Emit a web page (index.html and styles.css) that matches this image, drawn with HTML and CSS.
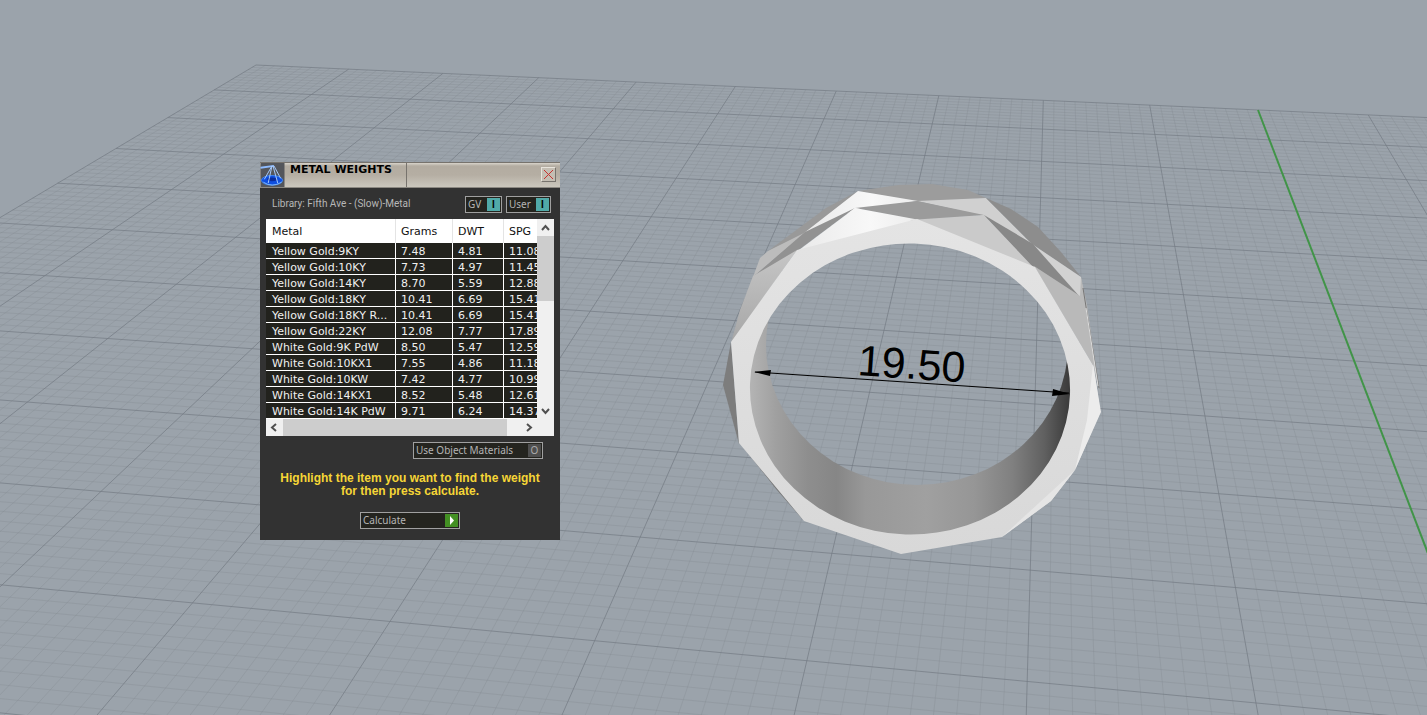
FILE: index.html
```html
<!DOCTYPE html>
<html lang="en">
<head>
    <meta charset="UTF-8">
    <meta name="viewport" content="width=device-width, initial-scale=1.0">
    <title>Metal Weights</title>
    <link rel="stylesheet" href="styles.css">
</head>
<body>
    <main class="viewport">
        <svg class="scene" viewBox="0 0 1427 715" preserveAspectRatio="xMinYMin slice" role="img" aria-label="Ring model, inner diameter 19.50">
            <defs>
                <linearGradient id="band" gradientUnits="userSpaceOnUse" x1="750" y1="0" x2="1070" y2="0">
                    <stop offset="0" stop-color="#b4b4b4"/>
                    <stop offset=".08" stop-color="#a0a0a0"/>
                    <stop offset=".18" stop-color="#8e8e8e"/>
                    <stop offset=".27" stop-color="#868686"/>
                    <stop offset=".36" stop-color="#989898"/>
                    <stop offset=".55" stop-color="#a0a0a0"/>
                    <stop offset=".7" stop-color="#969696"/>
                    <stop offset=".82" stop-color="#808080"/>
                    <stop offset=".92" stop-color="#606060"/>
                    <stop offset="1" stop-color="#3a3a3a"/>
                </linearGradient>
                <linearGradient id="face" x1="0" y1="0" x2="0" y2="1">
                    <stop offset="0" stop-color="#e4e4e4"/>
                    <stop offset="1" stop-color="#d8d8d8"/>
                </linearGradient>
                <linearGradient id="gleam" x1="0" y1="0" x2="1" y2="0">
                    <stop offset="0" stop-color="#e9e9e9"/>
                    <stop offset=".6" stop-color="#f8f8f8"/>
                    <stop offset="1" stop-color="#ececec"/>
                </linearGradient>
                <linearGradient id="side" x1="0" y1="0" x2="0" y2="1">
                    <stop offset="0" stop-color="#c6c6c6"/>
                    <stop offset="1" stop-color="#a6a6a6"/>
                </linearGradient>
                <mask id="backHole" maskUnits="userSpaceOnUse" x="700" y="150" width="450" height="450">
                    <rect x="700" y="150" width="450" height="450" fill="#fff"/>
                    <ellipse cx="917" cy="345" rx="151" ry="140" fill="#000"/>
                </mask>
            </defs>

            <path id="gridMinor" class="grid-minor"/>
            <path id="gridMajor" class="grid-major"/>
            <path id="axisY" class="axis-y"/>

            <!-- inside of the band -->
            <ellipse cx="910" cy="389" rx="161" ry="147" fill="url(#band)" mask="url(#backHole)"/>

            <!-- outer facets -->
            <path fill="#9c9c9c" d="M858 191L898 185L932 184L968 190L986 198L917 202Z"/>
            <path fill="#999" d="M858 191L826 208L768 251L806 233Z"/>
            <path fill="url(#gleam)" d="M858 191L918 201L855 210L804 233Z"/>
            <path fill="#d0d0d0" d="M917 201L986 198L1034 246L984 216Z"/>
            <path fill="#8d8d8d" d="M986 198L1011 209L1038 227L1061 252L1081 277L1033 245Z"/>
            <path fill="#d2d2d2" d="M1032 244L1081 277L1084 300L1079 297Z"/>
            <path fill="#bcbcbc" d="M768 251L760 258L753 277L806 232Z"/>
            <path fill="#929292" d="M855 208L805 232L753 277L797 251Z"/>
            <path fill="#9b9b9b" d="M855 208L917 201L984 215L917 220Z"/>
            <path fill="url(#gleam)" d="M855 208L920 220L795 253Z"/>
            <path fill="#cacaca" d="M910 220L984 215L1037 270Z"/>
            <path fill="#888" d="M984 215L1033 244L1080 297L1034 268Z"/>
            <path fill="url(#side)" d="M753 276L797 250L731 343L740 310Z"/>
            <path fill="#b9b9b9" d="M1034 266L1080 296L1081 277L1087 305L1100 395L1094 367Z"/>
            <path class="edge" d="M1083 288L1099 388"/>
            <path class="edge-light" d="M1086 308L1098 386"/>
            <path fill="#7d7d7d" d="M731 342L723 385L739 444Z"/>
            <path fill="#777" d="M740 443L776 489L804 521L780 486Z"/>

            <!-- front face -->
            <path fill="url(#face)" fill-rule="evenodd" d="M917 219L797 250L731 342L739 443L804 521L901 554L1002 537L1051 501L1075 470L1100 412L1094 367L1035 267ZM750 384A160 145.5 2 0 0 1070 394A160 145.5 2 0 0 750 384Z"/>
            <path fill="#ececec" d="M1093 364L1101 412L1075 470L1087 420Z"/>
            <path fill="#e5e5e5" d="M1075 470L1051 501L1002 537L1040 502Z"/>

            <!-- dimension -->
            <path class="dim-line" d="M755 372L1069 393"/>
            <path d="M754 372L771 370L770 376ZM1070 394L1053 389L1052 396Z"/>
            <text class="dim-text" x="857" y="375" transform="rotate(4 857 375)">19.50</text>
        </svg>

        <section class="dialog" aria-labelledby="dialogTitle">
            <header class="titlebar">
                <svg class="logo" viewBox="0 0 25 25" aria-hidden="true">
                    <rect width="25" height="25" fill="#54565b"/>
                    <ellipse cx="12" cy="18" rx="11" ry="5" fill="#0f4fe0" stroke="#3f86f5"/>
                    <ellipse cx="12" cy="17" rx="5" ry="2" fill="#0b2c9a"/>
                    <path d="M0 5L14 3" fill="none" stroke="#8fbcff" stroke-width="2"/>
                    <path d="M12 3L4 17M12 3L8 21M14 3L21 16M13 3L18 21" fill="none" stroke="#a9cdff"/>
                    <path d="M3 20Q12 26 22 20" fill="none" stroke="#7db8ff"/>
                </svg>
                <h1 id="dialogTitle">METAL WEIGHTS</h1>
                <button class="close" type="button" aria-label="Close">
                    <svg viewBox="0 0 9 9" aria-hidden="true"><path d="M0 0L9 9M9 0L0 9"/></svg>
                </button>
            </header>

            <div class="library">
                <span class="library-name">Library: Fifth Ave - (Slow)-Metal</span>
                <button class="btn btn-gv" type="button" aria-pressed="true">GV <span class="flag on">I</span></button>
                <button class="btn btn-user" type="button" aria-pressed="true">User <span class="flag on">I</span></button>
            </div>

            <div class="list">
                <div class="list-body">
                    <table>
                        <colgroup>
                            <col class="col-metal">
                            <col class="col-grams">
                            <col class="col-dwt">
                            <col class="col-spg">
                        </colgroup>
                        <thead>
                            <tr><th>Metal</th><th>Grams</th><th>DWT</th><th>SPG</th></tr>
                        </thead>
                        <tbody>
                            <tr><td>Yellow Gold:9KY</td><td>7.48</td><td>4.81</td><td>11.08</td></tr>
                            <tr><td>Yellow Gold:10KY</td><td>7.73</td><td>4.97</td><td>11.45</td></tr>
                            <tr><td>Yellow Gold:14KY</td><td>8.70</td><td>5.59</td><td>12.88</td></tr>
                            <tr><td>Yellow Gold:18KY</td><td>10.41</td><td>6.69</td><td>15.41</td></tr>
                            <tr><td>Yellow Gold:18KY R...</td><td>10.41</td><td>6.69</td><td>15.41</td></tr>
                            <tr><td>Yellow Gold:22KY</td><td>12.08</td><td>7.77</td><td>17.89</td></tr>
                            <tr><td>White Gold:9K PdW</td><td>8.50</td><td>5.47</td><td>12.59</td></tr>
                            <tr><td>White Gold:10KX1</td><td>7.55</td><td>4.86</td><td>11.18</td></tr>
                            <tr><td>White Gold:10KW</td><td>7.42</td><td>4.77</td><td>10.99</td></tr>
                            <tr><td>White Gold:14KX1</td><td>8.52</td><td>5.48</td><td>12.61</td></tr>
                            <tr><td>White Gold:14K PdW</td><td>9.71</td><td>6.24</td><td>14.37</td></tr>
                        </tbody>
                    </table>
                </div>
                <div class="scroll-y">
                    <svg class="arrow" viewBox="0 0 17 17" aria-hidden="true"><path d="M5 11L8.500 7L12 11"/></svg>
                    <div class="thumb"></div>
                    <svg class="arrow arrow-end" viewBox="0 0 17 17" aria-hidden="true"><path d="M5 7L8.500 11L12 7"/></svg>
                </div>
                <div class="scroll-x">
                    <svg class="arrow" viewBox="0 0 17 17" aria-hidden="true"><path d="M10 5L6 8.500L10 12"/></svg>
                    <div class="thumb"></div>
                    <svg class="arrow arrow-end" viewBox="0 0 17 17" aria-hidden="true"><path d="M7 5L11 8.500L7 12"/></svg>
                </div>
            </div>

            <div class="materials">
                <button class="btn btn-materials" type="button" aria-pressed="false">Use Object Materials <span class="flag off">O</span></button>
            </div>

            <p class="hint">Highlight the item you want to find the weight<br>for then press calculate.</p>

            <button class="btn btn-calc" type="button">Calculate
                <span class="flag go"><svg viewBox="0 0 13 13" aria-hidden="true"><path d="M5 2L9 6.500L5 11Z"/></svg></span>
            </button>
        </section>
    </main>
    <script src="grid.js"></script>
</body>
</html>
```
FILE: styles.css
```css
* {
    box-sizing: border-box;
}
body {
    margin: 0;
    background: #9ba3ab;
    font-family: "DejaVu Sans", Verdana, sans-serif;
    font-size: 11px;
}
.viewport {
    position: relative;
    height: 100vh;
    min-height: 560px;
    overflow: hidden;
}
.scene {
    display: block;
    width: 100%;
    height: 100%;
}
.grid-minor {
    fill: none;
    stroke: #808890;
    stroke-opacity: 0.3;
}
.grid-major {
    fill: none;
    stroke: #737b83;
    stroke-opacity: 0.7;
}
.axis-y {
    stroke: #419448;
    stroke-width: 2;
}
.edge {
    fill: none;
    stroke: #777;
}
.edge-light {
    fill: none;
    stroke: #ddd;
}
.dim-line {
    stroke: #000;
}
.dim-text {
    font-family: "Liberation Sans", Arial, sans-serif;
    font-size: 43px;
}

/* dialog window floating over the viewport */
.dialog {
    position: absolute;
    left: 260px;
    top: 162px;
    width: 300px;
    padding-bottom: 11px;
    background: #323232;
    color: #b8b8b8;
}
.titlebar {
    display: flex;
    height: 26px;
    border-top: 1px solid #77736d;
    border-bottom: 1px solid #8c8982;
    background: linear-gradient(#d8d4cb 0, #b3aca1 3px, #b5aea3 50%, #cbc7bd 100%);
}
.logo {
    width: 25px;
    height: 24px;
}
.titlebar h1 {
    width: 122px;
    margin: 0;
    padding-left: 5px;
    border-right: 1px solid #77736d;
    color: #000;
    font-size: 11px;
    line-height: 13px;
}
.close {
    width: 15px;
    height: 15px;
    margin: 4px 4px 0 auto;
    padding: 2px;
    border: 1px solid #77736d;
    border-top-color: #e8e4dc;
    border-left-color: #e8e4dc;
    background: #c4beb3;
}
.close svg {
    display: block;
    width: 9px;
    height: 9px;
}
.close path {
    stroke: #c8322f;
}
.library {
    display: flex;
    gap: 4px;
    padding: 8px 9px 6px 12px;
}
.library-name {
    flex: 1;
    font-family: Roboto, Arial, sans-serif;
    font-size: 10px;
    line-height: 15px;
}
.btn {
    display: flex;
    align-items: center;
    justify-content: space-between;
    height: 17px;
    padding: 0 1px 0 2px;
    border: 1px solid #a0a0a0;
    background: #24241f;
    color: #b4b4b4;
    font-family: "Noto Sans", Tahoma, sans-serif;
    font-size: 10px;
    line-height: 15px;
}
.btn-gv {
    width: 37px;
}
.btn-user {
    width: 45px;
}
.flag {
    width: 13px;
    height: 13px;
    line-height: 13px;
    text-align: center;
}
.flag.on {
    background: #51aaa8;
    color: #000;
    font-family: "Liberation Sans", Arial, sans-serif;
    font-weight: bold;
}
.flag.off {
    background: #4e4e4e;
    color: #aaa;
}
.flag.go {
    background: #439023;
}
.flag.go path {
    fill: #fff;
}
.flag svg {
    display: block;
}

.list {
    display: grid;
    grid-template-columns: 1fr 17px;
    grid-template-rows: auto 17px;
    margin: 0 6px;
    background: #f0f0f0;
}
.list-body {
    overflow: hidden;
}
table {
    width: 320px;
    table-layout: fixed;
    border-collapse: separate;
    border-spacing: 0;
}
.col-metal {
    width: 130px;
}
.col-grams {
    width: 57px;
}
.col-dwt {
    width: 51px;
}
th,
td {
    padding: 0 0 0 5px;
    text-align: left;
    font-weight: normal;
    white-space: nowrap;
}
th {
    height: 24px;
    border-right: 1px solid #e4e4e4;
    background: #fff;
    color: #111;
}
td {
    height: 16px;
    padding-top: 2px;
    border-right: 1px solid #fff;
    border-bottom: 1px solid #fff;
    background: #22221d;
    color: #f0f0f0;
    line-height: 13px;
}
th:first-child,
td:first-child {
    padding-left: 6px;
}
.arrow {
    width: 17px;
    height: 17px;
    fill: none;
    stroke: #505050;
    stroke-width: 2;
}
.thumb {
    background: #cdcdcd;
}
.scroll-y {
    display: flex;
    flex-direction: column;
}
.scroll-y .thumb {
    height: 65px;
}
.scroll-y .arrow-end {
    margin-top: auto;
}
.scroll-x {
    display: flex;
}
.scroll-x .thumb {
    width: 224px;
}
.scroll-x .arrow-end {
    margin-left: auto;
}

.materials {
    display: flex;
    justify-content: flex-end;
    padding: 6px 17px 0 0;
}
.btn-materials {
    width: 130px;
}
.hint {
    margin: 13px 0 14px;
    color: #f6d636;
    font-family: "Liberation Sans", Arial, sans-serif;
    font-size: 12px;
    font-weight: bold;
    line-height: 13px;
    text-align: center;
}
.btn-calc {
    width: 100px;
    margin: 0 auto;
}
```
FILE: grid.js
```js
// Perspective mapping from grid cells to scene coordinates,
// solved from four known grid points.
const anchors = [
    [0, 0, 256, 65],
    [10, 0, 1258, 110],
    [3, 10, 2, 585],
    [9, 10, 1256, 703]
];

function solve(m) {
    const n = m.length;
    for (let c = 0; c < n; c++) {
        let p = c;
        for (let r = c + 1; r < n; r++) {
            if (Math.abs(m[r][c]) > Math.abs(m[p][c])) p = r;
        }
        [m[c], m[p]] = [m[p], m[c]];
        for (let r = 0; r < n; r++) {
            if (r === c) continue;
            const f = m[r][c] / m[c][c];
            for (let k = c; k <= n; k++) m[r][k] -= f * m[c][k];
        }
    }
    return m.map((row, i) => row[n] / row[i]);
}

const rows = [];
for (const [u, v, x, y] of anchors) {
    rows.push([u, v, 1, 0, 0, 0, -u * x, -v * x, x]);
    rows.push([0, 0, 0, u, v, 1, -u * y, -v * y, y]);
}
const h = solve(rows);

function point(u, v) {
    const w = h[6] * u + h[7] * v + 1;
    const x = (h[0] * u + h[1] * v + h[2]) / w;
    const y = (h[3] * u + h[4] * v + h[5]) / w;
    return x.toFixed(1) + ' ' + y.toFixed(1);
}

const COLS = 16;
const ROWS = 12;
const line = (a, b, c, d) => 'M' + point(a, b) + 'L' + point(c, d);
let minor = '';
let major = '';

for (let i = 0; i <= COLS * 10; i++) {
    if (i === 100) continue;
    const d = line(i / 10, 0, i / 10, ROWS);
    if (i % 10) minor += d; else major += d;
}
for (let j = 0; j <= ROWS * 10; j++) {
    const d = line(0, j / 10, COLS, j / 10);
    if (j % 10) minor += d; else major += d;
}

document.getElementById('gridMinor').setAttribute('d', minor);
document.getElementById('gridMajor').setAttribute('d', major);
document.getElementById('axisY').setAttribute('d', line(10, 0, 10, ROWS));
```
